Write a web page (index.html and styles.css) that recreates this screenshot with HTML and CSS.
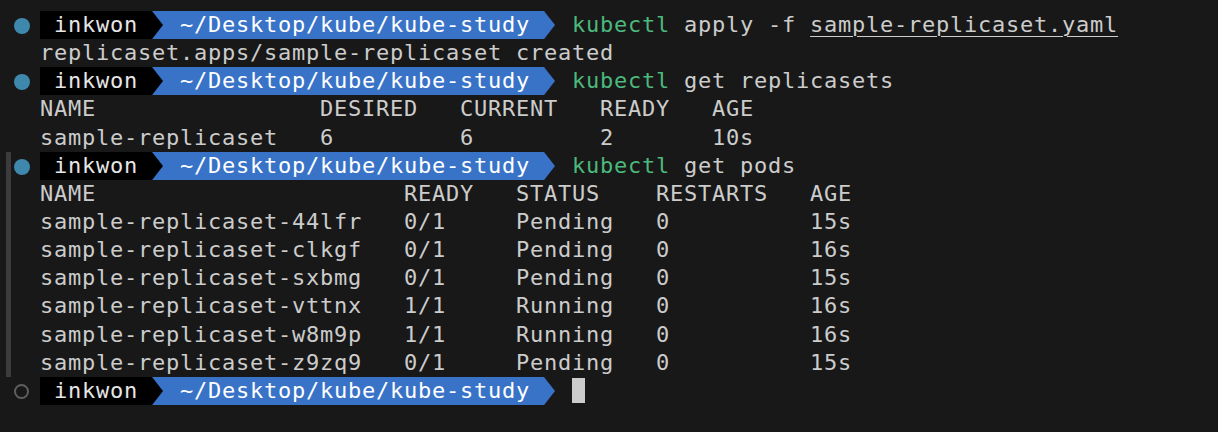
FILE: index.html
```html
<!DOCTYPE html>
<html>
<head>
<meta charset="utf-8">
<link rel="stylesheet" href="styles.css">
</head>
<body>
<div class="term">
  <div class="block">
    <div class="gutter"><span class="bar off"></span><div class="marks"><span class="dot"></span></div></div>
    <div class="lines">
      <div class="line prompt"><span class="user"> inkwon </span><span class="sep sep1"><svg viewBox="0 0 14 28" preserveAspectRatio="none"><polygon points="0,0 11,14 0,28" fill="#000"/></svg></span><span class="path"> ~/Desktop/kube/kube-study </span><span class="sep sep2"><svg viewBox="0 0 14 28" preserveAspectRatio="none"><polygon points="0,0 11,14 0,28" fill="#3873c8"/></svg></span><span class="cmd"> <span class="green">kubectl</span> apply -f <span class="ul">sample-replicaset.yaml</span></span></div>
      <div class="line">replicaset.apps/sample-replicaset created</div>
    </div>
  </div>
  <div class="block">
    <div class="gutter"><span class="bar off"></span><div class="marks"><span class="dot"></span></div></div>
    <div class="lines">
      <div class="line prompt"><span class="user"> inkwon </span><span class="sep sep1"><svg viewBox="0 0 14 28" preserveAspectRatio="none"><polygon points="0,0 11,14 0,28" fill="#000"/></svg></span><span class="path"> ~/Desktop/kube/kube-study </span><span class="sep sep2"><svg viewBox="0 0 14 28" preserveAspectRatio="none"><polygon points="0,0 11,14 0,28" fill="#3873c8"/></svg></span><span class="cmd"> <span class="green">kubectl</span> get replicasets</span></div>
      <div class="line">NAME                DESIRED   CURRENT   READY   AGE</div>
      <div class="line">sample-replicaset   6         6         2       10s</div>
    </div>
  </div>
  <div class="block">
    <div class="gutter"><span class="bar"></span><div class="marks"><span class="dot"></span></div></div>
    <div class="lines">
      <div class="line prompt"><span class="user"> inkwon </span><span class="sep sep1"><svg viewBox="0 0 14 28" preserveAspectRatio="none"><polygon points="0,0 11,14 0,28" fill="#000"/></svg></span><span class="path"> ~/Desktop/kube/kube-study </span><span class="sep sep2"><svg viewBox="0 0 14 28" preserveAspectRatio="none"><polygon points="0,0 11,14 0,28" fill="#3873c8"/></svg></span><span class="cmd"> <span class="green">kubectl</span> get pods</span></div>
      <div class="line">NAME                      READY   STATUS    RESTARTS   AGE</div>
      <div class="line">sample-replicaset-44lfr   0/1     Pending   0          15s</div>
      <div class="line">sample-replicaset-clkgf   0/1     Pending   0          16s</div>
      <div class="line">sample-replicaset-sxbmg   0/1     Pending   0          15s</div>
      <div class="line">sample-replicaset-vttnx   1/1     Running   0          16s</div>
      <div class="line">sample-replicaset-w8m9p   1/1     Running   0          16s</div>
      <div class="line">sample-replicaset-z9zq9   0/1     Pending   0          15s</div>
    </div>
  </div>
  <div class="block">
    <div class="gutter"><span class="bar off"></span><div class="marks"><span class="ring"></span></div></div>
    <div class="lines">
      <div class="line prompt"><span class="user"> inkwon </span><span class="sep sep1"><svg viewBox="0 0 14 28" preserveAspectRatio="none"><polygon points="0,0 11,14 0,28" fill="#000"/></svg></span><span class="path"> ~/Desktop/kube/kube-study </span><span class="sep sep2"><svg viewBox="0 0 14 28" preserveAspectRatio="none"><polygon points="0,0 11,14 0,28" fill="#3873c8"/></svg></span><span class="cmd"> </span><span class="cursor"></span></div>
    </div>
  </div>
</div>
</body>
</html>
```

FILE: styles.css
```css
html, body {
  margin: 0;
  padding: 0;
  background: #181818;
  width: 1218px;
  height: 432px;
  overflow: hidden;
}

.term {
  padding-top: 11px;
  font-family: "DejaVu Sans Mono", monospace;
  font-size: 22px;
  letter-spacing: 0.755px;
  line-height: 28.15px;
  color: #cccccc;
}

.block {
  display: flex;
}

.gutter {
  width: 40px;
  flex: none;
  display: flex;
}

.bar {
  flex: none;
  width: 5px;
  margin-left: 6px;
  background: #3c3c3f;
}

.bar.off {
  background: transparent;
}

.marks {
  flex: none;
  width: 29px;
  height: 28.15px;
  display: flex;
  align-items: center;
  padding-left: 3px;
  padding-top: 2px;
  box-sizing: border-box;
}

.dot {
  flex: none;
  display: block;
  width: 16px;
  height: 16px;
  border-radius: 50%;
  background: #3f88ad;
}

.ring {
  flex: none;
  display: block;
  width: 11px;
  height: 11px;
  border-radius: 50%;
  border: 2.5px solid #5e5e5e;
}

.lines {
  flex: 1;
}

.line {
  white-space: pre;
  height: 28.15px;
}

.prompt {
  display: flex;
}

.user {
  background: #000;
  color: #e6e6e6;
  white-space: pre;
}

.path {
  background: #3873c8;
  color: #ffffff;
  white-space: pre;
}

.sep {
  width: 14px;
  display: flex;
}

.sep svg {
  width: 14px;
  height: 100%;
  display: block;
}

.sep1 {
  background: #3873c8;
}

.sep2 {
  background: #181818;
}

.cmd {
  white-space: pre;
}

.green {
  color: #4bb97d;
}

.ul {
  text-decoration: underline;
  text-underline-offset: 4px;
  text-decoration-thickness: 1px;
}

.cursor {
  width: 13px;
  background: #cccccc;
  margin: 1px 0 2px 0;
}
```
